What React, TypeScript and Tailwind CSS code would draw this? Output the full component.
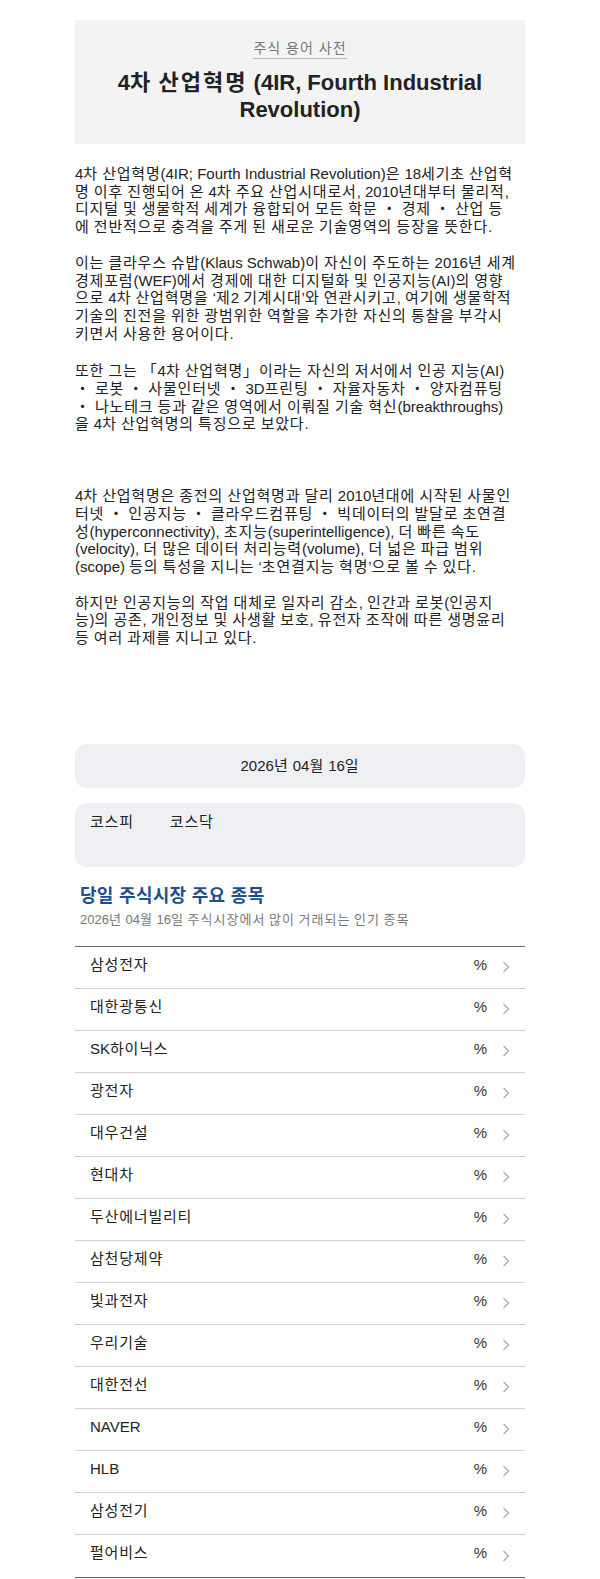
import { Fragment } from "react"

const stocks = [
  "삼성전자",
  "대한광통신",
  "SK하이닉스",
  "광전자",
  "대우건설",
  "현대차",
  "두산에너빌리티",
  "삼천당제약",
  "빛과전자",
  "우리기술",
  "대한전선",
  "NAVER",
  "HLB",
  "삼성전기",
  "펄어비스",
]

const paragraphs = [
  {
    gap: "",
    lines: [
      "4차 산업혁명(4IR; Fourth Industrial Revolution)은 18세기초 산업혁",
      "명 이후 진행되어 온 4차 주요 산업시대로서, 2010년대부터 물리적,",
      "디지털 및 생물학적 세계가 융합되어 모든 학문 ・ 경제 ・ 산업 등",
      "에 전반적으로 충격을 주게 된 새로운 기술영역의 등장을 뜻한다.",
    ],
  },
  {
    gap: "mt-[18px]",
    lines: [
      "이는 클라우스 슈밥(Klaus Schwab)이 자신이 주도하는 2016년 세계",
      "경제포럼(WEF)에서 경제에 대한 디지털화 및 인공지능(AI)의 영향",
      "으로 4차 산업혁명을 ‘제2 기계시대’와 연관시키고, 여기에 생물학적",
      "기술의 진전을 위한 광범위한 역할을 추가한 자신의 통찰을 부각시",
      "키면서 사용한 용어이다.",
    ],
  },
  {
    gap: "mt-[20px]",
    lines: [
      "또한 그는 「4차 산업혁명」이라는 자신의 저서에서 인공 지능(AI)",
      "・ 로봇 ・ 사물인터넷 ・ 3D프린팅 ・ 자율자동차 ・ 양자컴퓨팅",
      "・ 나노테크 등과 같은 영역에서 이뤄질 기술 혁신(breakthroughs)",
      "을 4차 산업혁명의 특징으로 보았다.",
    ],
  },
  {
    gap: "mt-[54px]",
    lines: [
      "4차 산업혁명은 종전의 산업혁명과 달리 2010년대에 시작된 사물인",
      "터넷 ・ 인공지능 ・ 클라우드컴퓨팅 ・ 빅데이터의 발달로 초연결",
      "성(hyperconnectivity), 초지능(superintelligence), 더 빠른 속도",
      "(velocity), 더 많은 데이터 처리능력(volume), 더 넓은 파급 범위",
      "(scope) 등의 특성을 지니는 ‘초연결지능 혁명’으로 볼 수 있다.",
    ],
  },
  {
    gap: "mt-[18px]",
    lines: [
      "하지만 인공지능의 작업 대체로 일자리 감소, 인간과 로봇(인공지",
      "능)의 공존, 개인정보 및 사생활 보호, 유전자 조작에 따른 생명윤리",
      "등 여러 과제를 지니고 있다.",
    ],
  },
]

const HANGUL = /([\u1100-\u11ff\u3130-\u318f\uac00-\ud7a3「」・]+)/

// hangul in the reference font runs a little wider, so space it out a touch
function Ko({ text, cls }: { text: string; cls: string }) {
  return (
    <>
      {text.split(HANGUL).map((part, i) =>
        i % 2 === 1 ? (
          <span key={i} className={cls}>
            {part}
          </span>
        ) : (
          <Fragment key={i}>{part}</Fragment>
        )
      )}
    </>
  )
}

function Chevron() {
  return (
    <svg width="8" height="14" viewBox="0 0 8 14" fill="none" className="shrink-0 mt-[5px]">
      <path d="M1.5 2 L6.5 7 L1.5 12" stroke="#aaaaaa" strokeWidth="1.3" />
    </svg>
  )
}

export default function App() {
  return (
    <div
      className="bg-white text-[#222] pt-[20px] pb-[2px]"
      style={{ fontFamily: '"Liberation Sans", "Noto Sans CJK KR", sans-serif' }}
    >
      <div className="w-[450px] mx-auto">
        <header className="bg-[#f3f3f3] pt-[16px] pb-[21px] text-center">
          <span className="inline-block text-[14px] leading-[20px] tracking-[1px] text-[#777] border-b border-[#bbb]">
            주식 용어 사전
          </span>
          <h1 className="mt-[10px] px-[20px] text-[22px] leading-[26.5px] font-bold text-[#222]">
            <Ko text="4차 산업혁명 (4IR, Fourth Industrial Revolution)" cls="tracking-[2px]" />
          </h1>
        </header>

        <section className="mt-[21px] text-[15px] leading-[17.7px] text-[#222]">
          {paragraphs.map((p, i) => (
            <div key={i} className={p.gap}>
              {p.lines.map((line, j) => (
                <div key={j} className="whitespace-nowrap">
                  <Ko text={line} cls="tracking-[0.8px]" />
                </div>
              ))}
            </div>
          ))}
        </section>

        <div className="mt-[97px] h-[44px] rounded-[12px] bg-[#eff0f4] flex items-center justify-center text-[15px]">
          <span>
            <Ko text="2026년 04월 16일" cls="tracking-[0.8px]" />
          </span>
        </div>

        <div className="mt-[15px] h-[64px] rounded-[12px] bg-[#eff0f4] px-[15px] pt-[10px]">
          <div className="flex gap-[36px] text-[15px] leading-[18px] tracking-[0.8px]">
            <span>코스피</span>
            <span>코스닥</span>
          </div>
        </div>

        <div className="mt-[18px] px-[5px]">
          <h2 className="text-[18px] leading-[22px] font-bold tracking-[0.3px] text-[#1d4f8f]">당일 주식시장 주요 종목</h2>
          <p className="mt-[4px] text-[13px] leading-[17px] text-[#777]">
            <Ko text="2026년 04월 16일 주식시장에서 많이 거래되는 인기 종목" cls="tracking-[1px]" />
          </p>
        </div>

        <ul className="mt-[18px] border-t border-b border-[#666]">
          {stocks.map((name, i) => (
            <li
              key={name}
              className={`h-[42px] flex items-center pl-[15px] pr-[15px] pb-[5px] text-[15px] ${
                i < stocks.length - 1 ? "border-b border-[#d0d0d0]" : ""
              }`}
            >
              <span className="flex-1">
                <Ko text={name} cls="tracking-[0.8px]" />
              </span>
              <span className="mr-[15px] text-[#333]">%</span>
              <Chevron />
            </li>
          ))}
        </ul>
      </div>
    </div>
  )
}
